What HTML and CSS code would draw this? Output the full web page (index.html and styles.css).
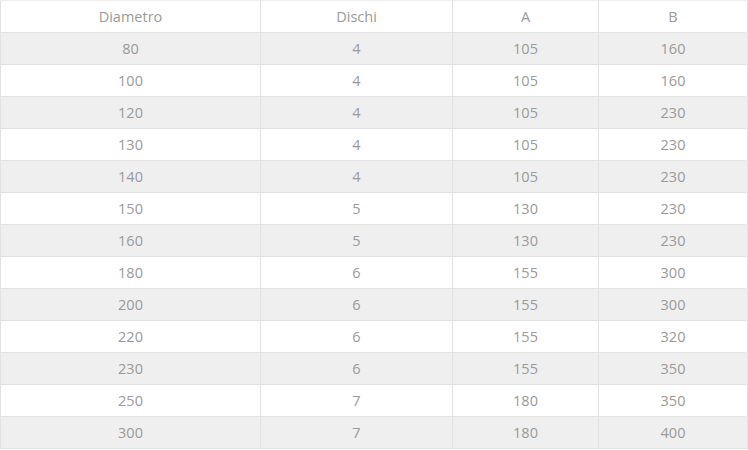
FILE: index.html
```html
<!DOCTYPE html>
<html>
<head>
<meta charset="utf-8">
<link rel="stylesheet" href="styles.css">
</head>
<body>
<table class="sizes">
  <colgroup>
    <col class="c1"><col class="c2"><col class="c3"><col class="c4">
  </colgroup>
  <thead>
    <tr><th>Diametro</th><th>Dischi</th><th>A</th><th>B</th></tr>
  </thead>
  <tbody>
    <tr><td>80</td><td>4</td><td>105</td><td>160</td></tr>
    <tr><td>100</td><td>4</td><td>105</td><td>160</td></tr>
    <tr><td>120</td><td>4</td><td>105</td><td>230</td></tr>
    <tr><td>130</td><td>4</td><td>105</td><td>230</td></tr>
    <tr><td>140</td><td>4</td><td>105</td><td>230</td></tr>
    <tr><td>150</td><td>5</td><td>130</td><td>230</td></tr>
    <tr><td>160</td><td>5</td><td>130</td><td>230</td></tr>
    <tr><td>180</td><td>6</td><td>155</td><td>300</td></tr>
    <tr><td>200</td><td>6</td><td>155</td><td>300</td></tr>
    <tr><td>220</td><td>6</td><td>155</td><td>320</td></tr>
    <tr><td>230</td><td>6</td><td>155</td><td>350</td></tr>
    <tr><td>250</td><td>7</td><td>180</td><td>350</td></tr>
    <tr><td>300</td><td>7</td><td>180</td><td>400</td></tr>
  </tbody>
</table>
</body>
</html>
```
FILE: styles.css
```css
html, body {
  margin: 0;
  padding: 0;
  background: #fff;
}
.sizes {
  border-collapse: collapse;
  table-layout: fixed;
  width: 747px;
  font-family: "Open Sans", sans-serif;
  font-size: 14.5px;
  color: #9a9a9a;
}
.c1 { width: 260px; }
.c2 { width: 192px; }
.c3 { width: 146px; }
.c4 { width: 149px; }
.sizes th,
.sizes td {
  height: 31px;
  padding: 0;
  text-align: center;
  font-weight: normal;
  border: 1px solid #e2e2e2;
  border-top: 0;
}
.sizes th {
  border-top: 1px solid #eeeeee;
}
.sizes tbody tr:nth-child(odd) td {
  background: #efefef;
}
```
